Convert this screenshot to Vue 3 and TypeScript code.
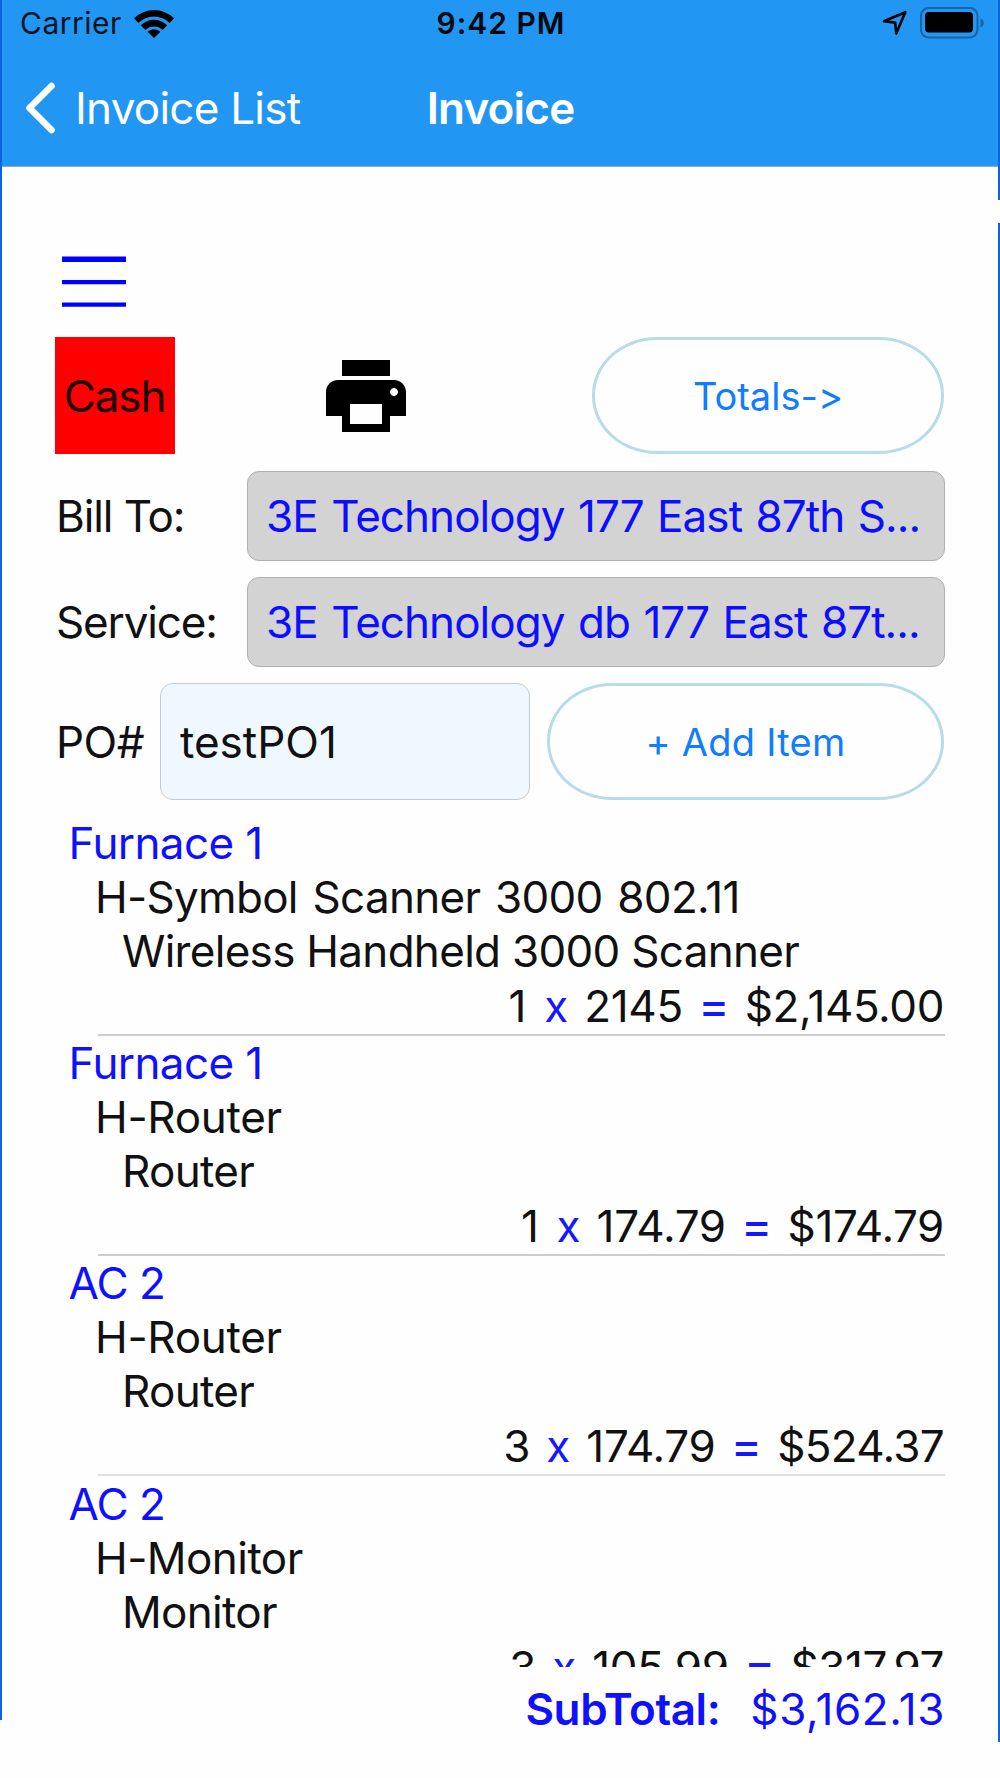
<script setup lang="ts">
interface InvoiceItem {
  kind: string
  unit: string
  name: string
  detail: string
  qty: string
  price: string
  total: string
}

const items: InvoiceItem[] = [
  { kind: 'furnace scanner', unit: 'Furnace 1', name: 'H-Symbol Scanner 3000 802.11', detail: 'Wireless Handheld 3000 Scanner', qty: '1', price: '2145', total: '$2,145.00' },
  { kind: 'furnace router', unit: 'Furnace 1', name: 'H-Router', detail: 'Router', qty: '1', price: '174.79', total: '$174.79' },
  { kind: 'ac router faint', unit: 'AC 2', name: 'H-Router', detail: 'Router', qty: '3', price: '174.79', total: '$524.37' },
  { kind: 'ac monitor', unit: 'AC 2', name: 'H-Monitor', detail: 'Monitor', qty: '3', price: '105.99', total: '$317.97' },
]
</script>

<template>
  <div class="screen">
    <header class="top">
      <div class="status">
        <div class="carrier">
          <span class="carrier-name">Carrier</span>
          <svg class="wifi" width="40" height="29" viewBox="0 0 40 29">
            <path d="M0 9.2A28.5 28.5 0 0 1 40 9.2L35.6 13.9A22.4 22.4 0 0 0 4.4 13.9Z" />
            <path d="M6.8 16.2A18.6 18.6 0 0 1 33.2 16.2L28.6 20.9A12.6 12.6 0 0 0 11.4 20.9Z" />
            <path d="M13.6 22.8A9.3 9.3 0 0 1 26.4 22.8L20 29Z" />
          </svg>
        </div>
        <span class="clock">9:42 PM</span>
        <div class="power">
          <svg width="26" height="26" viewBox="0 0 26 26">
            <path d="M2 11.3L23.3 2.2L14.2 23.4L13.2 12.6Z" fill="none" stroke="#000" stroke-width="2.6" stroke-linejoin="round" />
          </svg>
          <svg width="66" height="32" viewBox="0 0 66 32">
            <rect x="1" y="1" width="56.5" height="29.5" rx="7.5" fill="none" stroke="#1765a6" stroke-width="2" />
            <rect x="5" y="5" width="48" height="20.5" rx="4" />
            <path d="M60.5 11.5C64.8 13 64.8 19 60.5 20.5Z" fill="#1765a6" />
          </svg>
        </div>
      </div>
      <nav class="nav">
        <a class="back">
          <svg width="32" height="52" viewBox="0 0 32 52">
            <path d="M26.5 4L4.5 26L26.5 48" fill="none" stroke="#fff" stroke-width="6.6" stroke-linecap="round" stroke-linejoin="round" />
          </svg>
          <span class="back-label">Invoice List</span>
        </a>
        <h1 class="title">Invoice</h1>
      </nav>
    </header>

    <main class="body">
      <svg class="menu" width="64" height="52" viewBox="0 0 64 52">
        <path d="M0 .5H64V6H0ZM0 24H64V28.3H0ZM0 46.4H64V50.8H0Z" fill="#0000ff" />
      </svg>
      <div class="actions">
        <div class="cash"><span>Cash</span></div>
        <svg class="printer" width="96" height="96" viewBox="0 0 24 24">
          <path d="M19 8H5c-1.66 0-3 1.34-3 3v6h4v4h12v-4h4v-6c0-1.66-1.34-3-3-3zm-3 11H8v-5h8v5zm3-7c-.55 0-1-.45-1-1s.45-1 1-1 1 .45 1 1-.45 1-1 1zm-1-9H6v4h12V3z" />
        </svg>
        <button class="pill totals"><span>Totals-&gt;</span></button>
      </div>
      <div class="field">
        <label class="bill">Bill To:</label>
        <div class="value"><span>3E Technology 177 East 87th S...</span></div>
      </div>
      <div class="field second">
        <label class="service">Service:</label>
        <div class="value"><span>3E Technology db 177 East 87t...</span></div>
      </div>
      <div class="po">
        <label class="po-label">PO#</label>
        <div class="po-input"><span>testPO1</span></div>
        <button class="pill add"><span>+ Add Item</span></button>
      </div>

      <section class="list">
        <article v-for="(item, i) in items" :key="i" class="item" :class="item.kind">
          <p class="unit">{{ item.unit }}</p>
          <p class="name">{{ item.name }}</p>
          <p class="detail">{{ item.detail }}</p>
          <p class="sum">
            <span>{{ item.qty }}</span><span class="op times">x</span><span>{{ item.price }}</span><span class="op equals">=</span><span class="total">{{ item.total }}</span>
          </p>
        </article>
      </section>

      <footer class="subtotal"><b>SubTotal:</b><span>$3,162.13</span></footer>
    </main>
    <i class="edge left"></i>
    <i class="edge right-top"></i>
    <i class="edge right"></i>
  </div>
</template>

<style>
html, body { margin: 0; background: #fefefe; }
</style>

<style scoped>
.screen {
  position: relative;
  width: 1000px;
  height: 1778px;
  overflow: hidden;
  box-sizing: border-box;
  background: #fefefe;
  color: #111;
  font-family: Inter, 'Liberation Sans', sans-serif;
  font-size: 44px;
  line-height: 54px;
  font-feature-settings: 'calt' 0;
  white-space: nowrap;
}
.screen * { box-sizing: border-box; }
.top {
  height: 167px;
  background: #2196f3;
  border-bottom: 1px solid #9aa9b8;
}
.status {
  display: grid;
  grid-template-columns: 1fr auto 1fr;
  height: 46px;
  padding: 0 14px 0 20px;
  align-items: center;
  font-size: 30px;
  line-height: 46px;
  color: #06121d;
}
.carrier { display: flex; align-items: center; gap: 12px; }
.carrier-name { letter-spacing: 0.5px; }
.clock { font-weight: 600; color: #03090e; letter-spacing: 1px; padding-right: 4px; }
.power { display: flex; align-items: center; justify-content: flex-end; gap: 12px; padding-bottom: 1px; }
.nav {
  display: grid;
  grid-template-columns: 1fr auto 1fr;
  align-items: center;
  padding: 35px 0 0;
  color: #fff;
}
.back { display: flex; align-items: center; gap: 18px; padding-left: 25px; }
.back-label { letter-spacing: -0.75px; }
.title { margin: 0; font-size: 44px; font-weight: 600; line-height: 54px; letter-spacing: -0.8px; padding-left: 1px; }
.body { padding: 89px 55px 0 55px; }
.menu { display: block; margin-left: 7px; }
.actions { display: flex; align-items: center; height: 117px; margin-top: 29px; }
.cash {
  display: flex;
  align-items: center;
  justify-content: center;
  width: 120px;
  height: 117px;
  padding-right: 1px;
  background: #ff0000;
  color: #1c0000;
  letter-spacing: -1.1px;
}
.printer { margin-left: 143px; }
.pill {
  display: flex;
  align-items: center;
  justify-content: center;
  height: 117px;
  padding: 0;
  border: 3px solid #b5dce8;
  border-radius: 65px / 58px;
  background: transparent;
  color: #107cff;
  font-family: inherit;
  font-feature-settings: inherit;
  font-size: 38px;
  line-height: 48px;
}
.totals { width: 352px; margin-left: 178px; padding-top: 1px; }
.field { display: flex; align-items: center; height: 90px; margin-top: 16.5px; }
.field.second { margin-top: 16px; }
.field label { width: 192px; padding-left: 1px; }
.bill { letter-spacing: -1.1px; }
.service { letter-spacing: -1.15px; }
.value {
  display: flex;
  align-items: center;
  flex: 1;
  height: 90px;
  padding-left: 18px;
  border: 1px solid #b0b0b0;
  border-radius: 12px;
  background: #d3d3d3;
  color: #0d0dff;
  letter-spacing: -0.95px;
  word-spacing: 2px;
}
.po { display: flex; align-items: center; height: 117px; margin-top: 16.5px; }
.po-label { width: 105px; padding-left: 1px; letter-spacing: -0.5px; }
.po-input {
  display: flex;
  align-items: center;
  width: 370px;
  height: 117px;
  padding-left: 19px;
  border: 1px solid #c5cbd0;
  border-radius: 13px;
  background: #f0f8ff;
}
.add { width: 397px; margin-left: 17px; letter-spacing: 0.25px; }
.list { height: 851px; margin-top: 16px; overflow: hidden; }
.item { height: 220.2px; }
.item p { margin: 0; height: 54px; line-height: 54px; }
.item .unit { padding-left: 13.5px; color: #1010ff; }
.item .name { padding-left: 40px; }
.item .detail { padding-left: 67px; letter-spacing: -0.7px; }
.furnace .unit { letter-spacing: -0.6px; }
.ac .unit { letter-spacing: -0.95px; }
.scanner .name { letter-spacing: -0.7px; word-spacing: 3px; }
.router .name { letter-spacing: -0.3px; }
.monitor .name { letter-spacing: -0.55px; }
.item .sum {
  display: flex;
  justify-content: flex-end;
  height: 58px;
  margin-left: 43px;
  padding-top: 1px;
  padding-right: 1px;
  border-bottom: 2px solid #cdcdcd;
  letter-spacing: -0.3px;
}
.item.faint .sum { border-color: #dfdfdf; }
.total { letter-spacing: -0.4px; }
.faint .total { letter-spacing: -0.7px; }
.op { color: #1717ff; letter-spacing: 0; }
.times { margin: 0 16px 0 18px; }
.ac .times { margin-left: 16px; }
.equals { margin: 0 15px 0 15px; font-size: 48px; }
.subtotal {
  display: flex;
  justify-content: flex-end;
  gap: 30px;
  margin-top: 15px;
  color: #1010ff;
}
.subtotal b { font-weight: 600; letter-spacing: -0.4px; }
.subtotal span { letter-spacing: 0.6px; }
.edge { position: absolute; width: 2px; background: #0b66dd; }
.left { left: 0; top: 0; height: 1720px; }
.right-top { right: 0; top: 0; height: 200px; }
.right { right: 0; top: 223px; height: 1519px; }
</style>
